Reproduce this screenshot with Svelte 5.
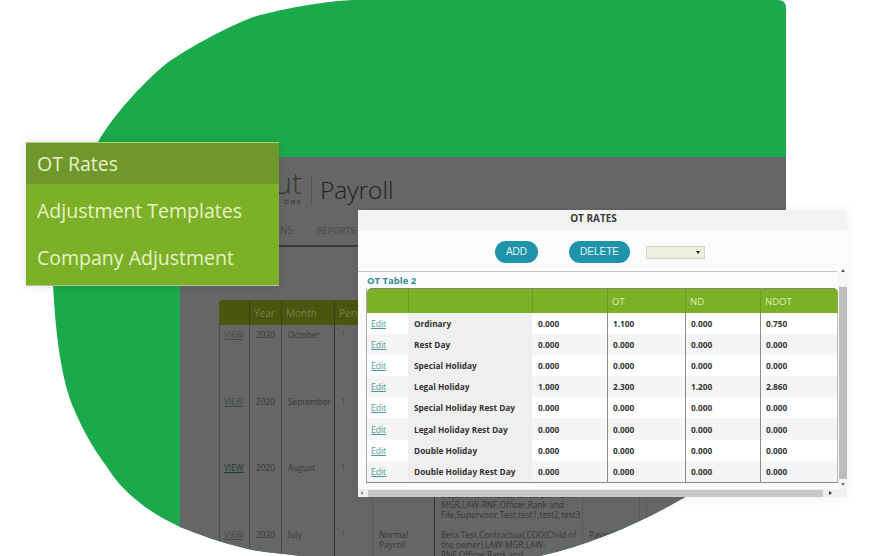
<script>
  const rates = [
    ['Ordinary', '0.000', '1.100', '0.000', '0.750'],
    ['Rest Day', '0.000', '0.000', '0.000', '0.000'],
    ['Special Holiday', '0.000', '0.000', '0.000', '0.000'],
    ['Legal Holiday', '1.000', '2.300', '1.200', '2.860'],
    ['Special Holiday Rest Day', '0.000', '0.000', '0.000', '0.000'],
    ['Legal Holiday Rest Day', '0.000', '0.000', '0.000', '0.000'],
    ['Double Holiday', '0.000', '0.000', '0.000', '0.000'],
    ['Double Holiday Rest Day', '0.000', '0.000', '0.000', '0.000']
  ];
  const names = 'Beta Test,Contractual,COO(Child of the owner),LAW-MGR,LAW-RNF,Officer,Rank and File,Supervisor,Test,test1,test2,test3';
  const longNames = 'Beta Test,Contractual,COO(Child of the owner),HR Manager,Operations Department Head,Admin Staff,LAW-MGR,LAW-RNF,Officer,Rank and File,Supervisor,Test,test1,test2,test3';
  const runs = [
    { month: 'October', link: 'faint', staff: names },
    { month: 'September', link: 'mid', staff: names },
    { month: 'August', link: 'dark', staff: longNames },
    { month: 'July', link: 'faint', staff: names }
  ];
</script>

<div class="stage">
  <div class="blob">
    <div class="shot">
      <div class="brand">
        <div class="logo"><span class="logo-word">ut</span><span class="logo-sub">ONS</span></div>
        <span class="rule"></span>
        <span class="product">Payroll</span>
      </div>
      <nav class="nav"><span>NS</span><span>REPORTS</span></nav>
      <div class="runs">
        <div class="runs-row runs-head">
          <span></span><span>Year</span><span>Month</span><span>Period</span><span></span><span></span><span></span><span></span>
        </div>
        {#each runs as run, i}
          <div class="runs-row">
            <span><u class={run.link}>VIEW</u></span>
            <span>2020</span>
            <span>{run.month}</span>
            <span>1</span>
            <span>Normal Payroll</span>
            <span class="names" class:end={i === 2}>{run.staff}</span>
            <span>Payroll</span>
            <span></span>
          </div>
        {/each}
      </div>
    </div>
  </div>

  <ul class="menu">
    <li class="active">OT Rates</li>
    <li>Adjustment Templates</li>
    <li>Company Adjustment</li>
  </ul>

  <section class="popup">
    <h2>OT RATES</h2>
    <div class="toolbar">
      <button class="add">ADD</button>
      <button class="delete">DELETE</button>
      <span class="select"><i></i></span>
    </div>
    <div class="body">
      <div class="panel">
        <h3>OT Table 2</h3>
        <table>
          <colgroup>
            <col style="width:41px" /><col style="width:124px" /><col style="width:75px" /><col style="width:78px" /><col style="width:75px" /><col style="width:78px" />
          </colgroup>
          <thead>
            <tr><th></th><th></th><th></th><th>OT</th><th>ND</th><th>NDOT</th></tr>
          </thead>
          <tbody>
            {#each rates as row}
              <tr>
                <td class="edit"><a href="#edit">Edit</a></td>
                <td class="label">{row[0]}</td>
                {#each row.slice(1) as v}<td>{v}</td>{/each}
              </tr>
            {/each}
          </tbody>
        </table>
      </div>
      <div class="vbar"><b class="up"></b><span class="vthumb"></span><b class="down"></b></div>
    </div>
    <div class="hbar"><b class="left"></b><span class="hthumb"></span><b class="right"></b></div>
  </section>
</div>

<style>
  :global(body) { margin: 0; background: #fff; }
  .stage {
    position: relative;
    width: 881px;
    height: 556px;
    overflow: hidden;
    background: #fff;
    font-family: "Open Sans", sans-serif;
  }
  .blob {
    position: absolute;
    inset: 0;
    box-sizing: border-box;
    padding: 157px 95px 0 180px;
    background: #1aaa4b;
    clip-path: path("M778 0Q786 0 786 8L786 400C760 445 720 478 680 500C640 523 590 545 540 556L300 556C280 553 260 553 240 547C220 542 200 535 180 527C165 520 150 511 140 503C125 491 115 480 107 467C92 447 82 428 73 407C62 380 56 340 53 285C54 230 70 190 98 142C110 120 140 85 167 63C190 47 225 28 253 17C285 8 330 0 360 0Z");
  }
  .shot {
    height: 399px;
    background: #666;
    overflow: hidden;
    color: #2e2e2e;
  }
  .brand {
    display: flex;
    align-items: center;
    height: 66px;
    padding-left: 70px;
    box-sizing: border-box;
  }
  .logo {
    display: flex;
    flex-direction: column;
    align-items: flex-end;
    width: 52px;
    line-height: 1;
    margin-right: 9px;
  }
  .logo-word { font-size: 30px; font-weight: 300; color: #3a3a3a; margin-top: -8px; }
  .logo-sub { font-size: 6px; letter-spacing: 1.8px; font-weight: 600; color: #333; margin-top: 1px; }
  .rule { width: 1px; height: 30px; background: #555; margin-right: 8px; }
  .product { font-size: 24.5px; font-weight: 300; color: #222; margin-top: -2px; }
  .nav {
    display: flex;
    gap: 24px;
    height: 24px;
    box-sizing: border-box;
    padding-left: 100px;
    border-bottom: 2px solid #3a3a3a;
    font-size: 9px;
    line-height: 15px;
    color: #484848;
  }
  .nav span:first-child { font-size: 10px; }
  .runs { margin: 53px 0 0 39px; width: 424px; font-size: 8.3px; }
  .runs-row {
    display: grid;
    grid-template-columns: 30px 32px 53px 38px 62px 148px 57px 3px;
    height: 66.7px;
    border-left: 1px solid #4c4c4c;
  }
  .runs-row > span {
    box-sizing: border-box;
    padding: 5px 0 0 6px;
    line-height: 10px;
    border-right: 1px solid #5a5a5a;
    overflow: hidden;
    color: #363636;
  }
  .runs-row > span:nth-child(1), .runs-row > span:nth-child(2) { border-right-color: #4a4a4a; }
  .runs-row > span:nth-child(3), .runs-row > span:nth-child(5) { border-right-color: #333; }
  .runs-row > span:nth-child(1) { padding-left: 4px; }
  .runs-row > span:nth-child(4) { color: #4a4a4a; }
  .runs-row .names { height: 100%; }
  .runs-row .names.end { display: flex; align-items: flex-end; padding: 0 0 5px 6px; }
  .runs-row.runs-head {
    height: 25px;
    background: #4a5510;
    border-radius: 4px 0 0 0;
    border-left-color: #4a5510;
    font-size: 10px;
  }
  .runs-row.runs-head > span {
    color: #768340;
    padding: 8px 0 0 4px;
    white-space: nowrap;
    border-right-color: #3a4110;
  }
  u { text-decoration: underline; }
  u.faint { color: #4a4a4a; }
  u.mid { color: #3a4a4a; }
  u.dark { color: #1f3a34; }

  .menu {
    position: absolute;
    left: 26px;
    top: 142px;
    width: 253px;
    margin: 0;
    padding: 0 0 4px;
    list-style: none;
    background: #7cb026;
    border-top: 1px solid #a6d66f;
    border-bottom: 1px solid #b4bda6;
    box-shadow: 0 0 10px rgba(0, 0, 0, 0.12);
    font-size: 19.5px;
    color: #e6f3c6;
  }
  .menu li {
    height: 47px;
    line-height: 47px;
    padding-left: 11px;
    white-space: nowrap;
  }
  .menu li.active { background: #6f972b; height: 41px; line-height: 41px; margin-bottom: 3px; }

  .popup {
    position: absolute;
    left: 358px;
    top: 210px;
    width: 489px;
    height: 287px;
    display: flex;
    flex-direction: column;
    background: #fbfbfb;
    box-shadow: 0 0 12px rgba(0, 0, 0, 0.06);
  }
  h2 {
    margin: 0;
    height: 21px;
    background: #f3f3f3;
    font-size: 10px;
    font-weight: 700;
    line-height: 17px;
    text-align: center;
    color: #3a3a3a;
    padding-right: 18px;
    box-sizing: border-box;
  }
  .toolbar {
    display: flex;
    align-items: center;
    height: 41px;
    box-sizing: border-box;
    padding: 0 0 0 137px;
    margin-right: 10px;
    border-bottom: 1px solid #c4c4c4;
  }
  button {
    height: 22px;
    padding: 0;
    margin-top: 1px;
    border: 0;
    border-radius: 11px;
    background: #1f93a9;
    color: #e4f4f6;
    font: 10px "Liberation Sans", Arial, sans-serif;
  }
  .add { width: 43px; margin-right: 31px; }
  .delete { width: 61px; margin-right: 16px; }
  .select {
    position: relative;
    width: 59px;
    height: 13px;
    margin-top: 2px;
    background: #eeeedd;
    border: 1px solid #d4d4c4;
    box-sizing: border-box;
  }
  .select i {
    position: absolute;
    right: 4px;
    top: 4px;
    border: 2px solid transparent;
    border-top: 3px solid #222;
    border-bottom: 0;
  }
  .body { flex: 1; display: flex; min-height: 0; }
  .panel { flex: 1; padding: 2px 0 0 8px; background: #fbfbfb; }
  h3 {
    margin: 0 0 0 1px;
    font-size: 9.5px;
    line-height: 14px;
    font-weight: 700;
    color: #2f8d95;
  }
  table {
    width: 471px;
    table-layout: fixed;
    border-collapse: separate;
    border-spacing: 0;
    border-bottom: 1px solid #888;
    border-left: 1px solid #aaa;
    font-size: 8.3px;
    color: #333;
  }
  th {
    height: 25px;
    box-sizing: border-box;
    padding: 0 0 0 4px;
    background: #7cb026;
    border-left: 1px solid #6d9a25;
    border-top: 1px solid #7d8a68;
    font-size: 9.5px;
    font-weight: 400;
    text-align: left;
    color: #dcefb4;
  }
  th:first-child { border-left: 0; border-top-left-radius: 5px; }
  th:last-child { border-top-right-radius: 5px; }
  td {
    height: 21.1px;
    padding: 0 0 0 5px;
    box-sizing: border-box;
    font-weight: 700;
    background: #fff;
    white-space: nowrap;
  }
  td:nth-child(3) { padding-left: 6px; }
  tr:nth-child(even) td { background: #f5f5f5; }
  td:nth-child(n + 4) { border-left: 1px solid #8c8c8c; }
  td:last-child { border-right: 1px solid #bbb; }
  td.edit { padding-left: 4px; font-weight: 400; font-size: 8.5px; }
  td.edit a { color: #4e9a9a; }
  td.label, tr:nth-child(even) td.label { background: #efefef; padding-left: 6px; }
  .vbar {
    width: 10px;
    display: flex;
    flex-direction: column;
    align-items: flex-end;
    background: #f6f6f6;
  }
  .vthumb { width: 8px; height: 192px; margin: 15px 0 2px; background: #bdbdbd; }
  .up, .down { align-self: center; border: 2px solid transparent; }
  .up { border-bottom: 3px solid #555; border-top: 0; margin-top: -3px; }
  .down { border-top: 3px solid #777; border-bottom: 0; margin-top: 2px; }
  .hbar {
    height: 8px;
    display: flex;
    align-items: center;
    background: #f0f0f0;
  }
  .hthumb { width: 455px; height: 7px; margin: 0 6px 0 5px; background: #c8c8c8; }
  .left, .right { border: 2px solid transparent; }
  .left { border-right: 3px solid #999; border-left: 0; margin-left: 2px; }
  .right { border-left: 3px solid #333; border-right: 0; }
</style>
